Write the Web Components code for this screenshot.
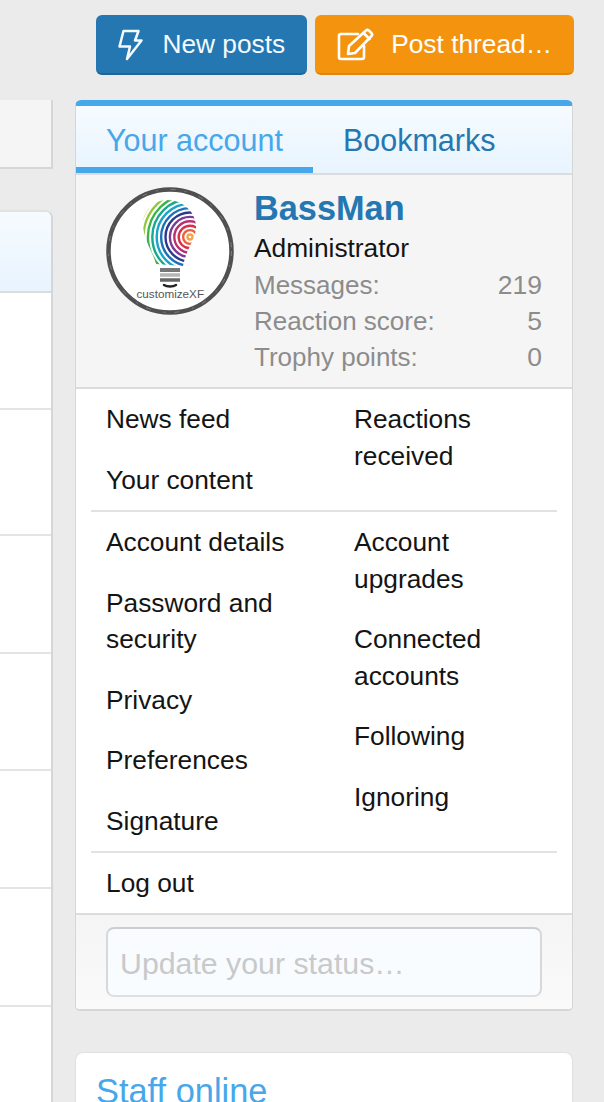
<!DOCTYPE html>
<html lang="en">
<head>
<meta charset="utf-8">
<title>Your account</title>
<style>
  html, body { margin: 0; height: 1102px; overflow: hidden; background: #ebebeb; }
  body { font: 26.3px/36.5px "Liberation Sans", Arial, sans-serif; color: #141414; }
</style>
</head>
<body>
<forum-page>
  <forum-button slot="actions" kind="blue" icon="bolt">New posts</forum-button>
  <forum-button slot="actions" kind="orange" icon="edit">Post thread…</forum-button>
  <forum-list slot="left"></forum-list>
  <account-menu slot="right"></account-menu>
  <staff-block slot="right">Staff online</staff-block>
</forum-page>

<script>
const icons = {
  bolt: `<svg width="26" height="32" viewBox="0 0 26 32" fill="none" stroke="currentColor" stroke-width="2.5" stroke-linejoin="round" stroke-linecap="round">
    <path d="M5.500 2h15l-3.500 9.500h6.500L9 30l3-12.500H1.500z"/></svg>`,
  edit: `<svg width="37" height="33" viewBox="0 0 37 33" fill="none" stroke="currentColor" stroke-width="2.6" stroke-linejoin="round" stroke-linecap="round">
    <path d="M21 6H4a2 2 0 0 0-2 2v21a2 2 0 0 0 2 2h21a2 2 0 0 0 2-2V18"/>
    <path d="M12 18 29 2.500a2 2 0 0 1 2.800 0l2.700 2.700a2 2 0 0 1 0 2.800L18 25l-7 1z"/>
    <path d="M26.500 5l6 6"/></svg>`
}

const rings = ['#f5a24a', '#ee5f3c', '#d9304a', '#b8326e', '#7d3a98', '#2c3a8e', '#1e70b8', '#1ba3c9', '#18a98e', '#3bb34b', '#8fc840', '#d8d84c', '#eadf6a']

customElements.define('forum-page',
  class extends HTMLElement {
    constructor () {
      super()
      this.attachShadow({ mode: 'open' }).innerHTML = `
<style>
  :host { display: block; width: 604px; height: 1102px; overflow: hidden; }
  .actions { display: flex; justify-content: flex-end; gap: 8px; padding: 15px 30px 0 0; }
  .columns { display: flex; align-items: flex-start; margin-top: 25px; }
  .left { width: 53px; flex: none; overflow: hidden; }
  .right { width: 498px; flex: none; margin-left: 22px; display: flex; flex-direction: column; gap: 41px; }
</style>
<div class="actions"><slot name="actions"></slot></div>
<div class="columns">
  <div class="left"><slot name="left"></slot></div>
  <div class="right"><slot name="right"></slot></div>
</div>`
    }
  }
)

customElements.define('forum-button',
  class extends HTMLElement {
    constructor () {
      super()
      this.attachShadow({ mode: 'open' }).innerHTML = `
<style>
  :host { display: flex; align-items: center; box-sizing: border-box; height: 60px; padding: 0 22px; border-radius: 6px; color: #f4faff; }
  :host([kind=blue]) { background: #2577b1; border-bottom: 2px solid #1f6596; --gap: 18px; }
  :host([kind=orange]) { background: #f4940e; border-bottom: 2px solid #dc8610; color: #fff; --gap: 17px; }
  span { display: flex; margin-right: var(--gap); margin-top: 1px; }
</style>
<span>${icons[this.getAttribute('icon')]}</span><slot></slot>`
    }
  }
)

customElements.define('forum-list',
  class extends HTMLElement {
    constructor () {
      super()
      const rows = [117, 126, 118, 117, 118, 118, 100]
        .map(h => `<div class="row" style="height:${h - 2}px"></div>`).join('')
      this.attachShadow({ mode: 'open' }).innerHTML = `
<style>
  :host { display: block; }
  .top { height: 67px; background: #f5f5f5; border: solid #d6d6d6; border-width: 0 2px 2px 0; }
  .box { margin-top: 41px; background: #fff; border-right: 2px solid #d6d6d6; border-top: 2px solid #e2e2e2; border-top-right-radius: 8px; }
  .head { height: 81px; background: linear-gradient(#f6fbff, #e9f4fe); border-bottom: 2px solid #dcdcdc; border-top-right-radius: 6px; box-sizing: border-box; }
  .row { border-bottom: 2px solid #e4e4e4; }
</style>
<div class="top"></div>
<div class="box"><div class="head"></div>${rows}</div>`
    }
  }
)

customElements.define('user-avatar',
  class extends HTMLElement {
    constructor () {
      super()
      const arcs = rings.map((c, i) => `<circle cx="84" cy="50" r="${2.5 + i * 4.4}" stroke="${c}"/>`).join('')
      this.attachShadow({ mode: 'open' }).innerHTML = `
<style>
  :host { display: block; width: 128px; height: 128px; flex: none; }
  text { font: 11.700px "Liberation Sans", Arial, sans-serif; fill: #555; }
</style>
<svg width="128" height="128" viewBox="0 0 128 128">
  <defs><clipPath id="bulb"><path d="M61 13C77 13 90 25 90 40 90 52 81 60 77 79L50 77C47 65 37 52 37 37 37 24 48 13 61 13Z"/></clipPath></defs>
  <circle cx="64" cy="64" r="61.500" fill="#fff" stroke="#505050" stroke-width="4.500"/>
  <circle cx="64" cy="64" r="61.500" fill="none" stroke="#808080" stroke-width="1" stroke-dasharray="5 9 2 13"/>
  <g clip-path="url(#bulb)" fill="none" stroke-width="2.400">${arcs}</g>
  <g fill="none">
    <path d="M54 83h20" stroke="#777" stroke-width="4"/>
    <path d="M54 88h20" stroke="#b5b5b5" stroke-width="3.500"/>
    <path d="M54 93h20" stroke="#666" stroke-width="3.500"/>
    <path d="M58 98c3 2 9 2 12 0" stroke="#222" stroke-width="2.500" stroke-linecap="round"/>
  </g>
  <text x="30.500" y="111">customizeXF</text>
</svg>`
    }
  }
)

customElements.define('user-stat',
  class extends HTMLElement {
    constructor () {
      super()
      this.attachShadow({ mode: 'open' }).innerHTML = `
<style>
  :host { display: flex; justify-content: space-between; height: 36px; line-height: 36px; color: #8c8c8c; font-size: 26px; }
  span { font-size: 26.500px; }
</style>
<slot></slot><span>${this.getAttribute('value')}</span>`
    }
  }
)

customElements.define('menu-link',
  class extends HTMLElement {
    constructor () {
      super()
      this.attachShadow({ mode: 'open' }).innerHTML = `
<style>
  :host { display: block; padding: 12px 0; line-height: 36.500px; color: #141414; }
</style>
<slot></slot>`
    }
  }
)

customElements.define('menu-group',
  class extends HTMLElement {
    constructor () {
      super()
      this.attachShadow({ mode: 'open' }).innerHTML = `
<style>
  :host { display: grid; grid-template-columns: 248px 1fr; margin: 0 15px; padding-left: 15px; border-bottom: 2px solid #e2e2e2; }
  :host([last]) { border-bottom: 0; display: block; margin-bottom: -1px; }
</style>
<div><slot name="a"></slot></div><div><slot name="b"></slot></div><slot></slot>`
    }
  }
)

customElements.define('account-menu',
  class extends HTMLElement {
    constructor () {
      super()
      this.attachShadow({ mode: 'open' }).innerHTML = `
<style>
  :host { display: block; box-sizing: border-box; background: #fff; border: solid #d6d6d6; border-width: 0 1.500px 2px; border-radius: 6px 6px 5px 5px; overflow: hidden; border-top: 6px solid #47a7eb; }
  .tabs { display: flex; height: 67px; box-sizing: border-box; background: linear-gradient(#f6fbff, #e8f4fe); font-size: 30.500px; line-height: 69px; }
  .tab { padding: 0 30px; color: #2577b1; }
  .tab.on { color: #47a7eb; box-shadow: inset 0 -6px 0 #47a7eb; }
  .profile { display: flex; gap: 20px; padding: 14px 30px 12px 30px; background: #f5f5f5; border-top: 2px solid #dcdcdc; border-bottom: 2px solid #dcdcdc; }
  .profile user-avatar { margin-top: -2px; }
  .info { flex: 1; min-width: 0; }
  .name { font-size: 34.300px; line-height: 42px; font-weight: 700; color: #2577b1; margin-top: -2px; }
  .role { line-height: 36px; margin-top: 1px; margin-bottom: 1px; }
  .footer { padding: 12px 30px; background: linear-gradient(#f5f5f5, #fafafa); border-top: 2px solid #dcdcdc; }
  .status { box-sizing: border-box; height: 70px; padding-left: 12px; background: #f8fcff; border: 2px solid; border-color: #cdcdcd #d8d8d8 #dfdfdf; border-radius: 8px; font-size: 30.300px; line-height: 69px; color: #c8c9ca; }
</style>
<div class="tabs"><div class="tab on">Your account</div><div class="tab">Bookmarks</div></div>
<div class="profile">
  <user-avatar></user-avatar>
  <div class="info">
    <div class="name">BassMan</div>
    <div class="role">Administrator</div>
    <user-stat value="219">Messages:</user-stat>
    <user-stat value="5">Reaction score:</user-stat>
    <user-stat value="0">Trophy points:</user-stat>
  </div>
</div>
<menu-group>
  <menu-link slot="a">News feed</menu-link>
  <menu-link slot="a">Your content</menu-link>
  <menu-link slot="b">Reactions received</menu-link>
</menu-group>
<menu-group>
  <menu-link slot="a">Account details</menu-link>
  <menu-link slot="a">Password and security</menu-link>
  <menu-link slot="a">Privacy</menu-link>
  <menu-link slot="a">Preferences</menu-link>
  <menu-link slot="a">Signature</menu-link>
  <menu-link slot="b">Account upgrades</menu-link>
  <menu-link slot="b">Connected accounts</menu-link>
  <menu-link slot="b">Following</menu-link>
  <menu-link slot="b">Ignoring</menu-link>
</menu-group>
<menu-group last><menu-link>Log out</menu-link></menu-group>
<div class="footer"><div class="status">Update your status…</div></div>`
    }
  }
)

customElements.define('staff-block',
  class extends HTMLElement {
    constructor () {
      super()
      this.attachShadow({ mode: 'open' }).innerHTML = `
<style>
  :host { display: block; height: 60px; box-sizing: border-box; padding: 16px 20px 0; background: #fff; border: 1.500px solid #e0e0e0; border-bottom: 0; border-radius: 8px 8px 0 0; font-size: 34.400px; line-height: 44px; color: #47a7eb; }
</style>
<slot></slot>`
    }
  }
)
</script>
</body>
</html>
